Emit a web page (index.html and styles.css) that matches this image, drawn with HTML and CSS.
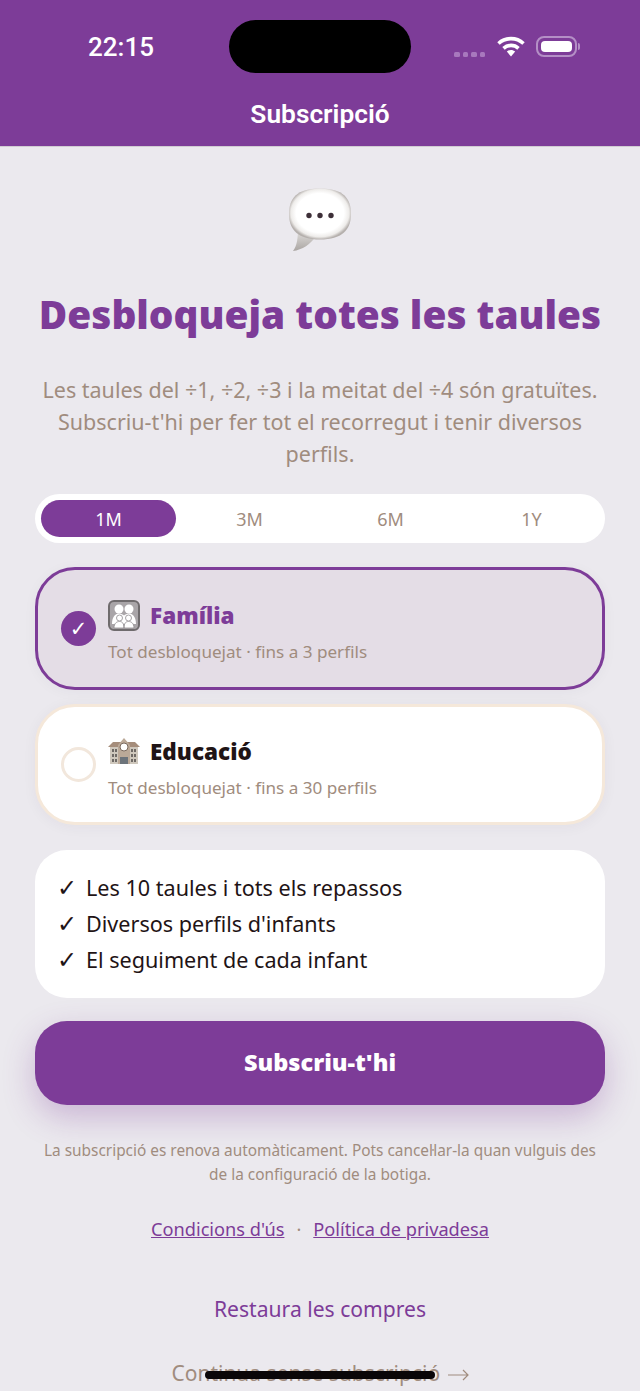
FILE: index.html
```html
<!DOCTYPE html>
<html lang="ca">
<head>
    <meta charset="UTF-8">
    <meta name="viewport" content="width=device-width, initial-scale=1.0">
    <title>Subscripció</title>
    <link rel="stylesheet" href="styles.css">
</head>
<body>
    <div class="screen">
        <!-- Header -->
        <header class="top-bar">
            <div class="status-bar">
                <div class="status-time">22:15</div>
                <div class="island"></div>
                <div class="status-icons">
                    <div class="signal"><span></span><span></span><span></span><span></span></div>
                    <svg class="wifi" width="28" height="21" viewBox="0 0 28 21">
                        <path d="M1.5 7.5C8.5 1 19.5 1 26.5 7.5" fill="none" stroke="#fff" stroke-width="3.6"/>
                        <path d="M6.5 12.3C10.8 8.4 17.2 8.4 21.5 12.3" fill="none" stroke="#fff" stroke-width="3.6"/>
                        <path d="M9.8 15.6C12.3 13.5 15.7 13.5 18.2 15.6L14 20.5Z" fill="#fff"/>
                    </svg>
                    <div class="battery"><div class="battery-fill"></div></div>
                    <div class="battery-tip"></div>
                </div>
            </div>
            <div class="top-title">Subscripció</div>
        </header>

        <main class="content">
            <svg class="bubble" width="64" height="64" viewBox="0 0 64 64">
                <defs>
                    <radialGradient id="bubbleFill" cx="50%" cy="48%" r="52%">
                        <stop offset="0.74" stop-color="#fff"/>
                        <stop offset="0.9" stop-color="#eeecea"/>
                        <stop offset="1" stop-color="#b5b0ad"/>
                    </radialGradient>
                    <linearGradient id="tailFill" x1="0" y1="0" x2="0" y2="1">
                        <stop offset="0" stop-color="#e8e6e4"/>
                        <stop offset="1" stop-color="#aaa5a2"/>
                    </linearGradient>
                </defs>
                <path d="M10 40C10 50 9 58 5 63C14 62 23 56 28 48Z" fill="url(#tailFill)"/>
                <path d="M32 0.5C55 0.5 63 10 63 26C63 42 54 51.500 32 51.500C10 51.500 1 42 1 26C1 10 9 0.5 32 0.5Z" fill="url(#bubbleFill)"/>
                <circle cx="21" cy="27.500" r="2.700" fill="#3d2f38"/>
                <circle cx="32" cy="27.500" r="2.700" fill="#3d2f38"/>
                <circle cx="43" cy="27.500" r="2.700" fill="#3d2f38"/>
            </svg>

            <h1 class="headline">Desbloqueja totes les taules</h1>
            <p class="intro">Les taules del ÷1, ÷2, ÷3 i la meitat del ÷4 són gratuïtes. Subscriu-t'hi per fer tot el recorregut i tenir diversos perfils.</p>

            <div class="tabs">
                <div class="tab tab-active">1M</div>
                <div class="tab">3M</div>
                <div class="tab">6M</div>
                <div class="tab">1Y</div>
            </div>

            <div class="plan plan-selected">
                <div class="radio radio-on">✓</div>
                <div class="plan-text">
                    <div class="plan-name">
                        <svg class="plan-icon" width="32" height="31" viewBox="0 0 32 31">
                            <rect x="1" y="1" width="30" height="29" rx="5" fill="#a9a5a8" stroke="#6f6b6d" stroke-width="2"/>
                            <circle cx="11" cy="9" r="4.500" fill="#fff"/>
                            <circle cx="21" cy="9" r="4.500" fill="#fff"/>
                            <path d="M4 24C4 16 8 13.500 11 13.500C13 13.500 15 14.500 16 15.500C17 14.500 19 13.500 21 13.500C24 13.500 28 16 28 24Z" fill="#fff"/>
                            <circle cx="11.500" cy="18" r="3" fill="#fff" stroke="#8f8b8e" stroke-width="0.800"/>
                            <circle cx="20.500" cy="18" r="3" fill="#fff" stroke="#8f8b8e" stroke-width="0.800"/>
                            <path d="M6 28C6 23 9 21.500 11.500 21.500C14 21.500 16 23 16 28ZM16 28C16 23 18 21.500 20.500 21.500C23 21.500 26 23 26 28Z" fill="#fff" stroke="#8f8b8e" stroke-width="0.800"/>
                        </svg>
                        <span>Família</span>
                    </div>
                    <div class="plan-desc">Tot desbloquejat · fins a 3 perfils</div>
                </div>
            </div>

            <div class="plan plan-plain">
                <div class="radio"></div>
                <div class="plan-text">
                    <div class="plan-name">
                        <svg class="plan-icon" width="32" height="27" viewBox="0 0 32 27">
                            <rect x="2" y="8" width="28" height="18" fill="#cfc8bd"/>
                            <path d="M0 9L5 4H27L32 9Z" fill="#a58d7b"/>
                            <path d="M10 7L16 0L22 7V26H10Z" fill="#bba998"/>
                            <circle cx="16" cy="9" r="4" fill="#fff" stroke="#7b6a5e"/>
                            <rect x="12" y="19" width="8" height="7" fill="#6d747b"/>
                            <g fill="#6f6a66">
                                <rect x="4" y="11" width="2" height="3"/><rect x="7" y="11" width="2" height="3"/>
                                <rect x="23" y="11" width="2" height="3"/><rect x="26" y="11" width="2" height="3"/>
                                <rect x="4" y="16" width="2" height="3"/><rect x="7" y="16" width="2" height="3"/>
                                <rect x="23" y="16" width="2" height="3"/><rect x="26" y="16" width="2" height="3"/>
                                <rect x="4" y="21" width="2" height="3"/><rect x="7" y="21" width="2" height="3"/>
                                <rect x="23" y="21" width="2" height="3"/><rect x="26" y="21" width="2" height="3"/>
                            </g>
                        </svg>
                        <span>Educació</span>
                    </div>
                    <div class="plan-desc">Tot desbloquejat · fins a 30 perfils</div>
                </div>
            </div>

            <ul class="features">
                <li><span class="tick">✓</span>Les 10 taules i tots els repassos</li>
                <li><span class="tick">✓</span>Diversos perfils d'infants</li>
                <li><span class="tick">✓</span>El seguiment de cada infant</li>
            </ul>

            <button class="subscribe">Subscriu-t'hi</button>

            <p class="legal">La subscripció es renova automàticament. Pots cancel·lar-la quan vulguis des de la configuració de la botiga.</p>

            <div class="links">
                <a href="#">Condicions d'ús</a>
                <span class="links-dot">·</span>
                <a href="#">Política de privadesa</a>
            </div>

            <div class="restore">Restaura les compres</div>
            <div class="skip">
                Continua sense subscripció
                <svg class="skip-arrow" width="21" height="12" viewBox="0 0 21 12">
                    <path d="M0 6H20M15 1L20 6L15 11" fill="none" stroke="#a08c7e" stroke-width="1.200"/>
                </svg>
            </div>
        </main>

        <div class="home-bar"></div>
    </div>
</body>
</html>
```

FILE: styles.css
```css
* {
    box-sizing: border-box;
}

body {
    margin: 0;
    font-family: "Noto Sans", Lato, sans-serif;
    background: #ebe9ee;
    color: #1f1416;
    height: 1391px;
    overflow: hidden;
}

.screen {
    position: relative;
    height: 1391px;
    overflow: hidden;
}

/* Header */
.top-bar {
    background: #7d3c98;
    height: 147px;
    border-bottom: 1px solid #d0ccd2;
    color: #fff;
}

.status-bar {
    display: flex;
    align-items: center;
    height: 53px;
    padding: 20px 0 0 88px;
    box-sizing: content-box;
}

.status-time {
    width: 141px;
    font-family: Roboto, sans-serif;
    font-size: 26px;
    font-weight: 500;
}

.island {
    width: 182px;
    height: 53px;
    border-radius: 27px;
    background: #000;
}

.status-icons {
    display: flex;
    align-items: center;
    margin-left: 43px;
}

.signal {
    display: flex;
    gap: 3px;
    margin-top: 16px;
}

.signal span {
    width: 5.500px;
    height: 5px;
    border-radius: 1.500px;
    background: #a878bd;
}

.wifi {
    margin-left: 12px;
}

.battery {
    width: 41px;
    height: 21px;
    margin-left: 11px;
    padding: 3px;
    border: 2px solid #b48fc6;
    border-radius: 8px;
}

.battery-fill {
    height: 100%;
    border-radius: 4px;
    background: #fff;
}

.battery-tip {
    width: 2px;
    height: 7px;
    margin-left: 1px;
    border-radius: 0 2px 2px 0;
    background: #b48fc6;
}

.top-title {
    margin-top: 25px;
    text-align: center;
    font-family: Roboto, sans-serif;
    font-size: 26.300px;
    font-weight: 600;
    line-height: 32px;
}

/* Main content */
.content {
    display: flex;
    flex-direction: column;
    align-items: center;
    padding: 41px 35px 0;
}

.bubble {
    display: block;
}

.headline {
    margin: 37px -10px 0;
    font-family: "Open Sans", sans-serif;
    font-size: 38.800px;
    font-weight: 800;
    line-height: 50px;
    color: #7d3c98;
    white-space: nowrap;
}

.intro {
    margin: 35px 0 0;
    text-align: center;
    font-size: 21.500px;
    line-height: 32px;
    color: #a08c7e;
}

.tabs {
    display: flex;
    gap: 6px;
    width: 100%;
    height: 49px;
    margin-top: 24px;
    padding: 6px;
    border-radius: 25px;
    background: #fff;
}

.tab {
    flex: 1;
    display: flex;
    align-items: center;
    justify-content: center;
    border-radius: 19px;
    font-size: 18px;
    color: #a08c7e;
}

.tab-active {
    background: #7d3c98;
    color: #fff;
}

.plan {
    display: flex;
    align-items: center;
    width: 100%;
    border-radius: 40px;
    padding: 0 23px;
}

.plan-selected {
    height: 123px;
    margin-top: 24px;
    border: 3px solid #7d3c98;
    background: #e4dde6;
    box-shadow: 0 2px 14px rgba(60, 30, 70, 0.04);
}

.plan-plain {
    height: 121px;
    margin-top: 14px;
    border: 3px solid #f5e8da;
    background: #fff;
    box-shadow: 0 2px 14px rgba(60, 30, 70, 0.05);
}

.radio {
    flex: none;
    display: flex;
    align-items: center;
    justify-content: center;
    width: 35px;
    height: 35px;
    margin-right: 12px;
    border: 3px solid #f2e7dc;
    border-radius: 50%;
    font-size: 21px;
    color: #fff;
}

.radio-on {
    border: 0;
    background: #7d3c98;
    font-family: "DejaVu Sans", sans-serif;
}

.plan-text {
    margin-top: 6px;
}

.plan-name {
    display: flex;
    align-items: center;
    gap: 10px;
    height: 32px;
    font-family: "Open Sans", sans-serif;
    font-size: 22.500px;
    font-weight: 800;
}

.plan-selected .plan-name {
    color: #7d3c98;
}

.plan-desc {
    margin-top: 9px;
    font-size: 17.100px;
    line-height: 24px;
    color: #a08c7e;
}

.features {
    width: 100%;
    margin: 25px 0 0;
    padding: 20px 22px;
    list-style: none;
    border-radius: 32px;
    background: #fff;
    font-size: 21.600px;
    line-height: 36px;
}

.features li {
    display: flex;
    height: 36px;
}

.tick {
    width: 29px;
    font-family: "DejaVu Sans", sans-serif;
    font-size: 24px;
    font-weight: 700;
}

.subscribe {
    width: 100%;
    height: 84px;
    margin-top: 23px;
    padding-bottom: 4px;
    border: 0;
    border-radius: 32px;
    background: #7d3c98;
    color: #fff;
    font-family: "Open Sans", sans-serif;
    font-size: 23.500px;
    font-weight: 800;
    box-shadow: 0 12px 32px rgba(125, 60, 152, 0.3);
}

.legal {
    margin: 34px 0 0;
    text-align: center;
    font-size: 15.400px;
    line-height: 24px;
    color: #a08c7e;
}

.links {
    display: flex;
    align-items: center;
    gap: 12px;
    margin-top: 30px;
    font-size: 18.200px;
    line-height: 24px;
}

.links a {
    color: #7d3c98;
}

.links-dot {
    color: #a08c7e;
}

.restore {
    margin-top: 53px;
    font-size: 21.100px;
    line-height: 30px;
    color: #7d3c98;
}

.skip {
    margin-top: 34px;
    font-size: 21px;
    line-height: 30px;
    color: #a08c7e;
}

.skip-arrow {
    margin-left: 2px;
}

.home-bar {
    position: absolute;
    left: 205px;
    bottom: 12px;
    width: 230px;
    height: 8px;
    border-radius: 4px;
    background: #0a0608;
}
```
